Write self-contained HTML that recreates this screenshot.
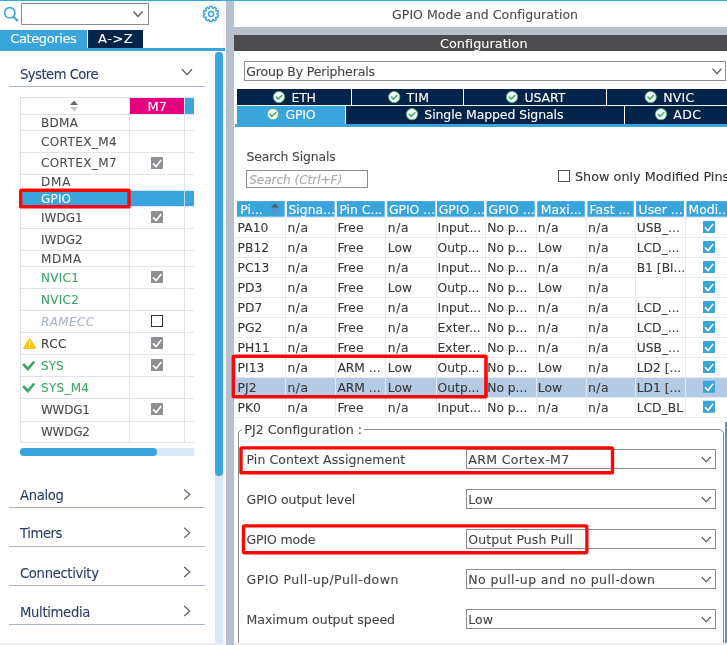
<!DOCTYPE html>
<html>
<head>
<meta charset="utf-8">
<title>GPIO Mode and Configuration</title>
<style>
html,body{margin:0;padding:0;}
body{width:727px;height:645px;position:relative;overflow:hidden;background:#fff;font-family:"DejaVu Sans","Liberation Sans",sans-serif;font-size:12px;color:#444;-webkit-text-stroke:0.1px currentColor;}
.a{position:absolute;}
.t{position:absolute;white-space:nowrap;height:20px;line-height:0;}
.t i{display:inline-block;width:0;height:20px;}
.hl{position:absolute;height:1px;background:#dfe3ee;}
.vl{position:absolute;width:1px;background:#dfe3ee;}
.sel{position:absolute;border:1px solid #8e8e8e;box-sizing:border-box;background:#fff;}
</style>
</head>
<body>
<div id="app" style="position:absolute;left:0;top:0;width:727px;height:645px;will-change:transform;">
<div class="a" style="left:0px;top:0px;width:727px;height:1px;background:#3aa4dc;"></div>
<svg class="a" style="left:3px;top:6px" width="16" height="17" viewBox="0 0 16 17"><circle cx="6.8" cy="6.8" r="5.2" fill="none" stroke="#3aa4dc" stroke-width="1.65"/><path d="M10.8 11 L14.3 14.5" stroke="#3aa4dc" stroke-width="1.9" stroke-linecap="round"/></svg>
<div class="sel" style="left:21px;top:3px;width:128px;height:22px;"></div>
<svg class="a" style="left:131px;top:9px" width="14" height="10" viewBox="131 9 14 10"><path d="M133.50 11.50 L138.00 16.50 L142.50 11.50" fill="none" stroke="#5a5a5a" stroke-width="1.25"/></svg>
<svg class="a" style="left:202px;top:4.9px" width="18" height="18" viewBox="-9 -9 18 18"><g fill="none" stroke="#3aa4dc" stroke-width="1.4" stroke-linejoin="round"><circle r="2.5"/><path d="M1.15 7.61 L-1.15 7.61 L-1.43 5.83 L-2.27 5.55 L-3.54 6.84 L-5.41 5.48 L-4.58 3.88 L-5.10 3.16 L-6.89 3.45 L-7.60 1.26 L-5.98 0.44 L-5.98 -0.44 L-7.60 -1.26 L-6.89 -3.45 L-5.10 -3.16 L-4.58 -3.88 L-5.41 -5.48 L-3.54 -6.84 L-2.27 -5.55 L-1.43 -5.83 L-1.15 -7.61 L1.15 -7.61 L1.43 -5.83 L2.27 -5.55 L3.54 -6.84 L5.41 -5.48 L4.58 -3.88 L5.10 -3.16 L6.89 -3.45 L7.60 -1.26 L5.98 -0.44 L5.98 0.44 L7.60 1.26 L6.89 3.45 L5.10 3.16 L4.58 3.88 L5.41 5.48 L3.54 6.84 L2.27 5.55 L1.43 5.83 Z"/></g></svg>
<div class="a" style="left:0px;top:30px;width:87px;height:18px;background:#3aa4dc;"></div>
<div class="t" style="left:10.2px;top:23.30px;font-size:13px;color:#fff;letter-spacing:-0.377px;"><i></i>Categories</div>
<div class="a" style="left:88px;top:30px;width:55px;height:18px;background:#03234b;"></div>
<div class="t" style="left:98px;top:23.30px;font-size:13px;color:#fff;letter-spacing:0.551px;"><i></i>A-&gt;Z</div>
<div class="t" style="left:20px;top:59.00px;font-size:13.2px;color:#2b3d66;letter-spacing:-0.534px;"><i></i>System Core</div>
<svg class="a" style="left:180px;top:67px" width="14" height="10" viewBox="180 67 14 10"><path d="M182.00 69.25 L187.00 74.75 L192.00 69.25" fill="none" stroke="#666" stroke-width="1.3"/></svg>
<div class="a" style="left:9px;top:86px;width:196px;height:1px;background:#a9b4c9;"></div>
<div class="a" style="left:130px;top:98px;width:54px;height:16px;background:#e6007e;"></div>
<div class="a" style="left:185px;top:98px;width:9px;height:16px;background:#3aa4dc;"></div>
<div class="t" style="left:147.6px;top:91.20px;font-size:13px;color:#fff;"><i></i>M7</div>
<svg class="a" style="left:70px;top:100px" width="8" height="12" viewBox="0 0 8 12"><path d="M0 5 L4 0.5 L8 5 Z" fill="#666"/><path d="M0 7 L4 11.5 L8 7 Z" fill="#c4c4c4"/></svg>
<div class="hl" style="left:20px;top:97.0px;width:174px;"></div>
<div class="hl" style="left:20px;top:114.4px;width:174px;"></div>
<div class="hl" style="left:20px;top:130.1px;width:174px;"></div>
<div class="hl" style="left:20px;top:152.4px;width:174px;"></div>
<div class="hl" style="left:20px;top:174.2px;width:174px;"></div>
<div class="hl" style="left:20px;top:190.0px;width:174px;"></div>
<div class="hl" style="left:20px;top:206.2px;width:174px;"></div>
<div class="hl" style="left:20px;top:228.3px;width:174px;"></div>
<div class="hl" style="left:20px;top:250.1px;width:174px;"></div>
<div class="hl" style="left:20px;top:266.3px;width:174px;"></div>
<div class="hl" style="left:20px;top:288.4px;width:174px;"></div>
<div class="hl" style="left:20px;top:310.3px;width:174px;"></div>
<div class="hl" style="left:20px;top:332.3px;width:174px;"></div>
<div class="hl" style="left:20px;top:354.4px;width:174px;"></div>
<div class="hl" style="left:20px;top:376.4px;width:174px;"></div>
<div class="hl" style="left:20px;top:398.4px;width:174px;"></div>
<div class="hl" style="left:20px;top:420.5px;width:174px;"></div>
<div class="hl" style="left:20px;top:442.4px;width:174px;"></div>
<div class="vl" style="left:20px;top:97px;height:346px;"></div>
<div class="vl" style="left:129px;top:97px;height:346px;"></div>
<div class="vl" style="left:184px;top:97px;height:346px;"></div>
<div class="a" style="left:20px;top:190.8px;width:174px;height:15.4px;background:#3aa4dc;"></div>
<div class="a" style="left:184px;top:190.8px;width:1px;height:15.4px;background:#bcdcf2;"></div>
<div class="t" style="left:41px;top:107.00px;font-size:12px;color:#4c4c4c;letter-spacing:0.316px;"><i></i>BDMA</div>
<div class="t" style="left:41px;top:126.20px;font-size:12px;color:#4c4c4c;letter-spacing:0.388px;"><i></i>CORTEX_M4</div>
<div class="t" style="left:41px;top:147.40px;font-size:12px;color:#4c4c4c;letter-spacing:0.388px;"><i></i>CORTEX_M7</div>
<svg class="a" style="left:151px;top:157px" width="12" height="12" viewBox="151 157 12 12"><g transform="translate(151 157)"><rect width="12" height="12" rx="0.5" fill="#8f8f96"/><path d="M2.0 6.4 L5.1 9.5 L10.2 3.0" fill="none" stroke="#fff" stroke-width="1.6"/></g></svg>
<div class="t" style="left:41px;top:166.30px;font-size:12px;color:#4c4c4c;letter-spacing:0.799px;"><i></i>DMA</div>
<div class="t" style="left:41px;top:182.60px;font-size:12px;color:#fff;letter-spacing:0.170px;"><i></i>GPIO</div>
<div class="t" style="left:41px;top:201.60px;font-size:12px;color:#4c4c4c;letter-spacing:0.004px;"><i></i>IWDG1</div>
<svg class="a" style="left:151px;top:211px" width="12" height="12" viewBox="151 211 12 12"><g transform="translate(151 211)"><rect width="12" height="12" rx="0.5" fill="#8f8f96"/><path d="M2.0 6.4 L5.1 9.5 L10.2 3.0" fill="none" stroke="#fff" stroke-width="1.6"/></g></svg>
<div class="t" style="left:41px;top:223.80px;font-size:12px;color:#4c4c4c;letter-spacing:0.004px;"><i></i>IWDG2</div>
<div class="t" style="left:41px;top:242.70px;font-size:12px;color:#4c4c4c;letter-spacing:0.686px;"><i></i>MDMA</div>
<div class="t" style="left:41px;top:261.70px;font-size:12px;color:#3ca464;letter-spacing:0.272px;"><i></i>NVIC1</div>
<svg class="a" style="left:151px;top:271px" width="12" height="12" viewBox="151 271 12 12"><g transform="translate(151 271)"><rect width="12" height="12" rx="0.5" fill="#8f8f96"/><path d="M2.0 6.4 L5.1 9.5 L10.2 3.0" fill="none" stroke="#fff" stroke-width="1.6"/></g></svg>
<div class="t" style="left:41px;top:283.60px;font-size:12px;color:#3ca464;letter-spacing:0.272px;"><i></i>NVIC2</div>
<div class="t" style="left:41px;top:305.60px;font-size:12px;color:#aab4c8;font-style:italic;letter-spacing:0.393px;"><i></i>RAMECC</div>
<svg class="a" style="left:151px;top:315px" width="12" height="12" viewBox="151 315 12 12"><g transform="translate(151 315)"><rect x="0.5" y="0.5" width="11" height="11" fill="#fff" stroke="#333" stroke-width="1"/></g></svg>
<div class="t" style="left:41px;top:327.75px;font-size:12px;color:#3e3e3e;letter-spacing:0.501px;"><i></i>RCC</div>
<svg class="a" style="left:151px;top:337px" width="12" height="12" viewBox="151 337 12 12"><g transform="translate(151 337)"><rect width="12" height="12" rx="0.5" fill="#8f8f96"/><path d="M2.0 6.4 L5.1 9.5 L10.2 3.0" fill="none" stroke="#fff" stroke-width="1.6"/></g></svg>
<div class="t" style="left:41px;top:349.60px;font-size:12px;color:#3ca464;letter-spacing:0.012px;"><i></i>SYS</div>
<svg class="a" style="left:151px;top:359px" width="12" height="12" viewBox="151 359 12 12"><g transform="translate(151 359)"><rect width="12" height="12" rx="0.5" fill="#8f8f96"/><path d="M2.0 6.4 L5.1 9.5 L10.2 3.0" fill="none" stroke="#fff" stroke-width="1.6"/></g></svg>
<div class="t" style="left:41px;top:371.60px;font-size:12px;color:#3ca464;letter-spacing:0.275px;"><i></i>SYS_M4</div>
<div class="t" style="left:41px;top:393.60px;font-size:12px;color:#4c4c4c;letter-spacing:-0.281px;"><i></i>WWDG1</div>
<svg class="a" style="left:151px;top:403px" width="12" height="12" viewBox="151 403 12 12"><g transform="translate(151 403)"><rect width="12" height="12" rx="0.5" fill="#8f8f96"/><path d="M2.0 6.4 L5.1 9.5 L10.2 3.0" fill="none" stroke="#fff" stroke-width="1.6"/></g></svg>
<div class="t" style="left:41px;top:415.60px;font-size:12px;color:#4c4c4c;letter-spacing:-0.241px;"><i></i>WWDG2</div>
<svg class="a" style="left:22px;top:336px" width="16" height="15" viewBox="22 336 16 15"><path d="M29.6 339 L35.2 348.1 L24 348.1 Z" fill="#fcc512" stroke="#fcc512" stroke-width="1.7" stroke-linejoin="round"/><path d="M29.6 341.6 L29.6 345.2" stroke="#fff" stroke-width="1.1" stroke-linecap="round"/><circle cx="29.6" cy="346.9" r="0.65" fill="#fff"/></svg>
<svg class="a" style="left:20px;top:357px" width="18" height="16" viewBox="20 357 18 16"><path d="M23.1 364.00 L27.8 369.00 L34.2 361.50" fill="none" stroke="#3ca464" stroke-width="2.6"/></svg>
<svg class="a" style="left:20px;top:379px" width="18" height="16" viewBox="20 379 18 16"><path d="M23.1 386.00 L27.8 391.00 L34.2 383.50" fill="none" stroke="#3ca464" stroke-width="2.6"/></svg>
<svg class="a" style="left:18px;top:187px" width="114" height="23" viewBox="18 187 114 23"><rect x="20.70" y="190.20" width="108.30" height="16.60" rx="0.9" fill="none" stroke="#ff0606" stroke-width="3.4"/></svg>
<div class="a" style="left:20px;top:448px;width:174px;height:8px;background:#dbe8f7;"></div>
<div class="a" style="left:20px;top:448px;width:137px;height:8px;background:#3aa4dc;border-radius:4px;"></div>
<div class="t" style="left:20px;top:480.00px;font-size:13.2px;color:#2b3d66;letter-spacing:-0.318px;"><i></i>Analog</div>
<svg class="a" style="left:182px;top:487px" width="10" height="15" viewBox="182 487 10 15"><path d="M184.25 489.50 L189.75 494.50 L184.25 499.50" fill="none" stroke="#666" stroke-width="1.3"/></svg>
<div class="a" style="left:9px;top:506.8px;width:196px;height:1px;background:#a9b4c9;"></div>
<div class="t" style="left:20px;top:518.30px;font-size:13.2px;color:#2b3d66;letter-spacing:-0.418px;"><i></i>Timers</div>
<svg class="a" style="left:182px;top:525px" width="10" height="15" viewBox="182 525 10 15"><path d="M184.25 527.80 L189.75 532.80 L184.25 537.80" fill="none" stroke="#666" stroke-width="1.3"/></svg>
<div class="a" style="left:9px;top:545.8px;width:196px;height:1px;background:#a9b4c9;"></div>
<div class="t" style="left:20px;top:557.60px;font-size:13.2px;color:#2b3d66;letter-spacing:-0.334px;"><i></i>Connectivity</div>
<svg class="a" style="left:182px;top:565px" width="10" height="15" viewBox="182 565 10 15"><path d="M184.25 567.10 L189.75 572.10 L184.25 577.10" fill="none" stroke="#666" stroke-width="1.3"/></svg>
<div class="a" style="left:9px;top:584.7px;width:196px;height:1px;background:#a9b4c9;"></div>
<div class="t" style="left:20px;top:596.60px;font-size:13.2px;color:#2b3d66;letter-spacing:-0.328px;"><i></i>Multimedia</div>
<svg class="a" style="left:182px;top:604px" width="10" height="15" viewBox="182 604 10 15"><path d="M184.25 606.10 L189.75 611.10 L184.25 616.10" fill="none" stroke="#666" stroke-width="1.3"/></svg>
<div class="a" style="left:9px;top:623.7px;width:196px;height:1px;background:#a9b4c9;"></div>
<div class="a" style="left:215px;top:52px;width:8px;height:591px;background:#dbe8f7;"></div>
<div class="a" style="left:215px;top:52px;width:8px;height:424px;background:#3aa4dc;border-radius:4px;"></div>
<div class="a" style="left:223px;top:1px;width:3px;height:644px;background:#faf6f6;"></div>
<div class="a" style="left:226px;top:1px;width:8px;height:644px;background:#b8c0cc;"></div>
<div class="a" style="left:0px;top:48px;width:225px;height:3px;background:#3aa4dc;"></div>
<div class="a" style="left:234px;top:27px;width:493px;height:8px;background:#b8c0cc;"></div>
<div class="a" style="left:234px;top:35px;width:493px;height:15.6px;background:#4b4b4d;"></div>
<div class="t" style="left:392.1px;top:-1.20px;font-size:12.5px;color:#4a4a4a;letter-spacing:0.036px;"><i></i>GPIO Mode and Configuration</div>
<div class="t" style="left:439.9px;top:27.80px;font-size:12.8px;color:#fff;letter-spacing:0.069px;"><i></i>Configuration</div>
<div class="sel" style="left:244px;top:61px;width:482px;height:20px;"></div>
<div class="t" style="left:246.3px;top:55.60px;font-size:12.5px;color:#444;letter-spacing:-0.160px;"><i></i>Group By Peripherals</div>
<svg class="a" style="left:710px;top:66px" width="14" height="10" viewBox="710 66 14 10"><path d="M712.50 68.70 L717.00 73.70 L721.50 68.70" fill="none" stroke="#5a5a5a" stroke-width="1.25"/></svg>
<div class="a" style="left:237px;top:89px;width:490px;height:16px;background:#03234b;"></div>
<div class="a" style="left:237px;top:105px;width:490px;height:1px;background:#f2f6fa;"></div>
<div class="a" style="left:237px;top:106px;width:490px;height:18px;background:#03234b;"></div>
<div class="a" style="left:237px;top:106px;width:108.5px;height:18px;background:#3aa4dc;"></div>
<div class="a" style="left:235px;top:124px;width:492px;height:3px;background:#3aa4dc;"></div>
<div class="a" style="left:351px;top:89px;width:1px;height:16px;background:#fff;"></div>
<div class="a" style="left:463px;top:89px;width:1px;height:16px;background:#fff;"></div>
<div class="a" style="left:606px;top:89px;width:1px;height:16px;background:#fff;"></div>
<div class="a" style="left:345px;top:106px;width:1px;height:18px;background:#fff;"></div>
<div class="a" style="left:624px;top:106px;width:1px;height:18px;background:#fff;"></div>
<svg class="a" style="left:272px;top:90px" width="14" height="14" viewBox="272 90 14 14"><g transform="translate(279 97)"><circle r="5.6" fill="#fbfffc" stroke="#4cb878" stroke-width="0.9"/><path d="M-3.2 -0.5 L-0.9 2.1 L3.3 -1.9" fill="none" stroke="#3cb06a" stroke-width="1.5"/></g></svg>
<div class="t" style="left:291.5px;top:81.80px;font-size:12.5px;color:#fff;letter-spacing:-0.211px;"><i></i>ETH</div>
<svg class="a" style="left:387px;top:90px" width="15" height="14" viewBox="387 90 15 14"><g transform="translate(394.2 97)"><circle r="5.6" fill="#fbfffc" stroke="#4cb878" stroke-width="0.9"/><path d="M-3.2 -0.5 L-0.9 2.1 L3.3 -1.9" fill="none" stroke="#3cb06a" stroke-width="1.5"/></g></svg>
<div class="t" style="left:406.6px;top:81.80px;font-size:12.5px;color:#fff;letter-spacing:0.198px;"><i></i>TIM</div>
<svg class="a" style="left:505px;top:90px" width="14" height="14" viewBox="505 90 14 14"><g transform="translate(512 97)"><circle r="5.6" fill="#fbfffc" stroke="#4cb878" stroke-width="0.9"/><path d="M-3.2 -0.5 L-0.9 2.1 L3.3 -1.9" fill="none" stroke="#3cb06a" stroke-width="1.5"/></g></svg>
<div class="t" style="left:524.4px;top:81.80px;font-size:12.5px;color:#fff;letter-spacing:-0.056px;"><i></i>USART</div>
<svg class="a" style="left:643px;top:90px" width="15" height="14" viewBox="643 90 15 14"><g transform="translate(650.7 97)"><circle r="5.6" fill="#fbfffc" stroke="#4cb878" stroke-width="0.9"/><path d="M-3.2 -0.5 L-0.9 2.1 L3.3 -1.9" fill="none" stroke="#3cb06a" stroke-width="1.5"/></g></svg>
<div class="t" style="left:663.2px;top:81.80px;font-size:12.5px;color:#fff;letter-spacing:0.221px;"><i></i>NVIC</div>
<svg class="a" style="left:265px;top:107px" width="15" height="15" viewBox="265 107 15 15"><g transform="translate(272.9 114.2)"><circle r="5.6" fill="#fbfffc" stroke="#4cb878" stroke-width="0.9"/><path d="M-3.2 -0.5 L-0.9 2.1 L3.3 -1.9" fill="none" stroke="#3cb06a" stroke-width="1.5"/></g></svg>
<div class="t" style="left:285.6px;top:98.80px;font-size:12.5px;color:#fff;letter-spacing:-0.237px;"><i></i>GPIO</div>
<svg class="a" style="left:405px;top:107px" width="14" height="15" viewBox="405 107 14 15"><g transform="translate(412 114.2)"><circle r="5.6" fill="#fbfffc" stroke="#4cb878" stroke-width="0.9"/><path d="M-3.2 -0.5 L-0.9 2.1 L3.3 -1.9" fill="none" stroke="#3cb06a" stroke-width="1.5"/></g></svg>
<div class="t" style="left:424.3px;top:98.80px;font-size:12.5px;color:#fff;letter-spacing:-0.106px;"><i></i>Single Mapped Signals</div>
<svg class="a" style="left:654px;top:107px" width="14" height="15" viewBox="654 107 14 15"><g transform="translate(661 114.2)"><circle r="5.6" fill="#fbfffc" stroke="#4cb878" stroke-width="0.9"/><path d="M-3.2 -0.5 L-0.9 2.1 L3.3 -1.9" fill="none" stroke="#3cb06a" stroke-width="1.5"/></g></svg>
<div class="t" style="left:673.3px;top:98.80px;font-size:12.5px;color:#fff;letter-spacing:0.332px;"><i></i>ADC</div>
<div class="t" style="left:246.5px;top:140.70px;font-size:12.4px;color:#444;letter-spacing:-0.142px;"><i></i>Search Signals</div>
<div class="sel" style="left:246px;top:170px;width:122px;height:18px;"></div>
<div class="t" style="left:249.2px;top:164.00px;font-size:12.2px;color:#aaa;font-style:italic;letter-spacing:-0.102px;"><i></i>Search (Ctrl+F)</div>
<div class="a" style="left:558px;top:170px;width:12px;height:12px;border:1px solid #555;box-sizing:border-box;background:#fff;"></div>
<div class="t" style="left:575px;top:161.00px;font-size:12.8px;color:#333;"><i></i>Show only Modified Pins</div>
<svg class="a" style="left:236px;top:201px" width="491" height="16" viewBox="236 201 491 16"><rect x="237" y="201.1" width="47.7" height="15.6" fill="#3aa4dc"/><rect x="286.9" y="201.1" width="47.7" height="15.6" fill="#3aa4dc"/><rect x="336.8" y="201.1" width="47.9" height="15.6" fill="#3aa4dc"/><rect x="387.2" y="201.1" width="48.1" height="15.6" fill="#3aa4dc"/><rect x="437" y="201.1" width="47.1" height="15.6" fill="#3aa4dc"/><rect x="486.6" y="201.1" width="48.1" height="15.6" fill="#3aa4dc"/><rect x="537.2" y="201.1" width="47.6" height="15.6" fill="#3aa4dc"/><rect x="587.4" y="201.1" width="46.4" height="15.6" fill="#3aa4dc"/><rect x="636.1" y="201.1" width="47.8" height="15.6" fill="#3aa4dc"/><rect x="686.4" y="201.1" width="40.6" height="15.6" fill="#3aa4dc"/></svg>
<div class="t" style="left:240.3px;top:193.70px;font-size:12.4px;color:#fff;"><i></i>Pi...</div>
<div class="t" style="left:288.5px;top:193.70px;font-size:12.4px;color:#fff;"><i></i>Signa...</div>
<div class="t" style="left:339.4px;top:193.70px;font-size:12.4px;color:#fff;"><i></i>Pin C...</div>
<div class="t" style="left:388.9px;top:193.70px;font-size:12.4px;color:#fff;"><i></i>GPIO ...</div>
<div class="t" style="left:438.7px;top:193.70px;font-size:12.4px;color:#fff;"><i></i>GPIO ...</div>
<div class="t" style="left:488.4px;top:193.70px;font-size:12.4px;color:#fff;"><i></i>GPIO ...</div>
<div class="t" style="left:540.7px;top:193.70px;font-size:12.4px;color:#fff;"><i></i>Maxi...</div>
<div class="t" style="left:589.6px;top:193.70px;font-size:12.4px;color:#fff;"><i></i>Fast ...</div>
<div class="t" style="left:638.6px;top:193.70px;font-size:12.4px;color:#fff;"><i></i>User ...</div>
<div class="t" style="left:688.5px;top:193.70px;font-size:12.4px;color:#fff;"><i></i>Modi...</div>
<svg class="a" style="left:271px;top:203px" width="8" height="12" viewBox="0 0 8 12"><path d="M0 4.5 L4 0.5 L8 4.5 Z" fill="#555"/><path d="M1.2 5 L6.8 5 L6.8 11 L1.2 11 Z" fill="#6f86b8" opacity="0.45"/></svg>
<div class="a" style="left:236px;top:377.5px;width:491px;height:20px;background:#b4cbe6;"></div>
<div class="hl" style="left:236px;top:217.1px;width:491px;background:#e6e9f1;"></div>
<div class="hl" style="left:236px;top:237.1px;width:491px;background:#e6e9f1;"></div>
<div class="hl" style="left:236px;top:257.0px;width:491px;background:#e6e9f1;"></div>
<div class="hl" style="left:236px;top:277.0px;width:491px;background:#e6e9f1;"></div>
<div class="hl" style="left:236px;top:297.0px;width:491px;background:#e6e9f1;"></div>
<div class="hl" style="left:236px;top:316.9px;width:491px;background:#e6e9f1;"></div>
<div class="hl" style="left:236px;top:336.9px;width:491px;background:#e6e9f1;"></div>
<div class="hl" style="left:236px;top:356.9px;width:491px;background:#e6e9f1;"></div>
<div class="hl" style="left:236px;top:376.9px;width:491px;background:#e6e9f1;"></div>
<div class="hl" style="left:236px;top:396.8px;width:491px;background:#e6e9f1;"></div>
<div class="hl" style="left:236px;top:416.8px;width:491px;background:#e6e9f1;"></div>
<div class="vl" style="left:285.3px;top:217px;height:200px;background:#e6e9f1;"></div>
<div class="vl" style="left:335.3px;top:217px;height:200px;background:#e6e9f1;"></div>
<div class="vl" style="left:385.3px;top:217px;height:200px;background:#e6e9f1;"></div>
<div class="vl" style="left:435.5px;top:217px;height:200px;background:#e6e9f1;"></div>
<div class="vl" style="left:485.3px;top:217px;height:200px;background:#e6e9f1;"></div>
<div class="vl" style="left:535.5px;top:217px;height:200px;background:#e6e9f1;"></div>
<div class="vl" style="left:585.5px;top:217px;height:200px;background:#e6e9f1;"></div>
<div class="vl" style="left:634.8px;top:217px;height:200px;background:#e6e9f1;"></div>
<div class="vl" style="left:684.8px;top:217px;height:200px;background:#e6e9f1;"></div>
<div class="t" style="left:237.6px;top:211.90px;font-size:12.3px;color:#383838;"><i></i>PA10</div>
<div class="t" style="left:287.5px;top:211.90px;font-size:12.3px;color:#383838;letter-spacing:0.574px;"><i></i>n/a</div>
<div class="t" style="left:337.40000000000003px;top:211.90px;font-size:12.3px;color:#383838;"><i></i>Free</div>
<div class="t" style="left:387.8px;top:211.90px;font-size:12.3px;color:#383838;letter-spacing:0.574px;"><i></i>n/a</div>
<div class="t" style="left:437.6px;top:211.90px;font-size:12.3px;color:#383838;"><i></i>Input...</div>
<div class="t" style="left:487.20000000000005px;top:211.90px;font-size:12.3px;color:#383838;"><i></i>No p...</div>
<div class="t" style="left:537.8000000000001px;top:211.90px;font-size:12.3px;color:#383838;letter-spacing:0.574px;"><i></i>n/a</div>
<div class="t" style="left:588.0px;top:211.90px;font-size:12.3px;color:#383838;letter-spacing:0.574px;"><i></i>n/a</div>
<div class="t" style="left:636.7px;top:211.90px;font-size:12.3px;color:#383838;"><i></i>USB_...</div>
<svg class="a" style="left:703px;top:221px" width="12" height="13" viewBox="703 221 12 13"><g transform="translate(703 221.1)"><rect width="12" height="12" rx="0.5" fill="#3aa4dc"/><path d="M2.0 6.4 L5.1 9.5 L10.2 3.0" fill="none" stroke="#fff" stroke-width="1.6"/></g></svg>
<div class="t" style="left:237.6px;top:231.87px;font-size:12.3px;color:#383838;"><i></i>PB12</div>
<div class="t" style="left:287.5px;top:231.87px;font-size:12.3px;color:#383838;letter-spacing:0.574px;"><i></i>n/a</div>
<div class="t" style="left:337.40000000000003px;top:231.87px;font-size:12.3px;color:#383838;"><i></i>Free</div>
<div class="t" style="left:387.8px;top:231.87px;font-size:12.3px;color:#383838;"><i></i>Low</div>
<div class="t" style="left:437.6px;top:231.87px;font-size:12.3px;color:#383838;"><i></i>Outp...</div>
<div class="t" style="left:487.20000000000005px;top:231.87px;font-size:12.3px;color:#383838;"><i></i>No p...</div>
<div class="t" style="left:537.8000000000001px;top:231.87px;font-size:12.3px;color:#383838;"><i></i>Low</div>
<div class="t" style="left:588.0px;top:231.87px;font-size:12.3px;color:#383838;letter-spacing:0.574px;"><i></i>n/a</div>
<div class="t" style="left:636.7px;top:231.87px;font-size:12.3px;color:#383838;"><i></i>LCD_...</div>
<svg class="a" style="left:703px;top:241px" width="12" height="13" viewBox="703 241 12 13"><g transform="translate(703 241.07)"><rect width="12" height="12" rx="0.5" fill="#3aa4dc"/><path d="M2.0 6.4 L5.1 9.5 L10.2 3.0" fill="none" stroke="#fff" stroke-width="1.6"/></g></svg>
<div class="t" style="left:237.6px;top:251.84px;font-size:12.3px;color:#383838;"><i></i>PC13</div>
<div class="t" style="left:287.5px;top:251.84px;font-size:12.3px;color:#383838;letter-spacing:0.574px;"><i></i>n/a</div>
<div class="t" style="left:337.40000000000003px;top:251.84px;font-size:12.3px;color:#383838;"><i></i>Free</div>
<div class="t" style="left:387.8px;top:251.84px;font-size:12.3px;color:#383838;letter-spacing:0.574px;"><i></i>n/a</div>
<div class="t" style="left:437.6px;top:251.84px;font-size:12.3px;color:#383838;"><i></i>Input...</div>
<div class="t" style="left:487.20000000000005px;top:251.84px;font-size:12.3px;color:#383838;"><i></i>No p...</div>
<div class="t" style="left:537.8000000000001px;top:251.84px;font-size:12.3px;color:#383838;letter-spacing:0.574px;"><i></i>n/a</div>
<div class="t" style="left:588.0px;top:251.84px;font-size:12.3px;color:#383838;letter-spacing:0.574px;"><i></i>n/a</div>
<div class="t" style="left:636.7px;top:251.84px;font-size:12.3px;color:#383838;"><i></i>B1 [Bl...</div>
<svg class="a" style="left:703px;top:261px" width="12" height="13" viewBox="703 261 12 13"><g transform="translate(703 261.03999999999996)"><rect width="12" height="12" rx="0.5" fill="#3aa4dc"/><path d="M2.0 6.4 L5.1 9.5 L10.2 3.0" fill="none" stroke="#fff" stroke-width="1.6"/></g></svg>
<div class="t" style="left:237.6px;top:271.81px;font-size:12.3px;color:#383838;"><i></i>PD3</div>
<div class="t" style="left:287.5px;top:271.81px;font-size:12.3px;color:#383838;letter-spacing:0.574px;"><i></i>n/a</div>
<div class="t" style="left:337.40000000000003px;top:271.81px;font-size:12.3px;color:#383838;"><i></i>Free</div>
<div class="t" style="left:387.8px;top:271.81px;font-size:12.3px;color:#383838;"><i></i>Low</div>
<div class="t" style="left:437.6px;top:271.81px;font-size:12.3px;color:#383838;"><i></i>Outp...</div>
<div class="t" style="left:487.20000000000005px;top:271.81px;font-size:12.3px;color:#383838;"><i></i>No p...</div>
<div class="t" style="left:537.8000000000001px;top:271.81px;font-size:12.3px;color:#383838;"><i></i>Low</div>
<div class="t" style="left:588.0px;top:271.81px;font-size:12.3px;color:#383838;letter-spacing:0.574px;"><i></i>n/a</div>
<svg class="a" style="left:703px;top:281px" width="12" height="13" viewBox="703 281 12 13"><g transform="translate(703 281.01)"><rect width="12" height="12" rx="0.5" fill="#3aa4dc"/><path d="M2.0 6.4 L5.1 9.5 L10.2 3.0" fill="none" stroke="#fff" stroke-width="1.6"/></g></svg>
<div class="t" style="left:237.6px;top:291.78px;font-size:12.3px;color:#383838;"><i></i>PD7</div>
<div class="t" style="left:287.5px;top:291.78px;font-size:12.3px;color:#383838;letter-spacing:0.574px;"><i></i>n/a</div>
<div class="t" style="left:337.40000000000003px;top:291.78px;font-size:12.3px;color:#383838;"><i></i>Free</div>
<div class="t" style="left:387.8px;top:291.78px;font-size:12.3px;color:#383838;letter-spacing:0.574px;"><i></i>n/a</div>
<div class="t" style="left:437.6px;top:291.78px;font-size:12.3px;color:#383838;"><i></i>Input...</div>
<div class="t" style="left:487.20000000000005px;top:291.78px;font-size:12.3px;color:#383838;"><i></i>No p...</div>
<div class="t" style="left:537.8000000000001px;top:291.78px;font-size:12.3px;color:#383838;letter-spacing:0.574px;"><i></i>n/a</div>
<div class="t" style="left:588.0px;top:291.78px;font-size:12.3px;color:#383838;letter-spacing:0.574px;"><i></i>n/a</div>
<div class="t" style="left:636.7px;top:291.78px;font-size:12.3px;color:#383838;"><i></i>LCD_...</div>
<svg class="a" style="left:703px;top:300px" width="12" height="13" viewBox="703 300 12 13"><g transform="translate(703 300.98)"><rect width="12" height="12" rx="0.5" fill="#3aa4dc"/><path d="M2.0 6.4 L5.1 9.5 L10.2 3.0" fill="none" stroke="#fff" stroke-width="1.6"/></g></svg>
<div class="t" style="left:237.6px;top:311.75px;font-size:12.3px;color:#383838;"><i></i>PG2</div>
<div class="t" style="left:287.5px;top:311.75px;font-size:12.3px;color:#383838;letter-spacing:0.574px;"><i></i>n/a</div>
<div class="t" style="left:337.40000000000003px;top:311.75px;font-size:12.3px;color:#383838;"><i></i>Free</div>
<div class="t" style="left:387.8px;top:311.75px;font-size:12.3px;color:#383838;letter-spacing:0.574px;"><i></i>n/a</div>
<div class="t" style="left:437.6px;top:311.75px;font-size:12.3px;color:#383838;"><i></i>Exter...</div>
<div class="t" style="left:487.20000000000005px;top:311.75px;font-size:12.3px;color:#383838;"><i></i>No p...</div>
<div class="t" style="left:537.8000000000001px;top:311.75px;font-size:12.3px;color:#383838;letter-spacing:0.574px;"><i></i>n/a</div>
<div class="t" style="left:588.0px;top:311.75px;font-size:12.3px;color:#383838;letter-spacing:0.574px;"><i></i>n/a</div>
<div class="t" style="left:636.7px;top:311.75px;font-size:12.3px;color:#383838;"><i></i>LCD_...</div>
<svg class="a" style="left:703px;top:320px" width="12" height="13" viewBox="703 320 12 13"><g transform="translate(703 320.95)"><rect width="12" height="12" rx="0.5" fill="#3aa4dc"/><path d="M2.0 6.4 L5.1 9.5 L10.2 3.0" fill="none" stroke="#fff" stroke-width="1.6"/></g></svg>
<div class="t" style="left:237.6px;top:331.72px;font-size:12.3px;color:#383838;"><i></i>PH11</div>
<div class="t" style="left:287.5px;top:331.72px;font-size:12.3px;color:#383838;letter-spacing:0.574px;"><i></i>n/a</div>
<div class="t" style="left:337.40000000000003px;top:331.72px;font-size:12.3px;color:#383838;"><i></i>Free</div>
<div class="t" style="left:387.8px;top:331.72px;font-size:12.3px;color:#383838;letter-spacing:0.574px;"><i></i>n/a</div>
<div class="t" style="left:437.6px;top:331.72px;font-size:12.3px;color:#383838;"><i></i>Exter...</div>
<div class="t" style="left:487.20000000000005px;top:331.72px;font-size:12.3px;color:#383838;"><i></i>No p...</div>
<div class="t" style="left:537.8000000000001px;top:331.72px;font-size:12.3px;color:#383838;letter-spacing:0.574px;"><i></i>n/a</div>
<div class="t" style="left:588.0px;top:331.72px;font-size:12.3px;color:#383838;letter-spacing:0.574px;"><i></i>n/a</div>
<div class="t" style="left:636.7px;top:331.72px;font-size:12.3px;color:#383838;"><i></i>USB_...</div>
<svg class="a" style="left:703px;top:340px" width="12" height="13" viewBox="703 340 12 13"><g transform="translate(703 340.91999999999996)"><rect width="12" height="12" rx="0.5" fill="#3aa4dc"/><path d="M2.0 6.4 L5.1 9.5 L10.2 3.0" fill="none" stroke="#fff" stroke-width="1.6"/></g></svg>
<div class="t" style="left:237.6px;top:351.69px;font-size:12.3px;color:#383838;"><i></i>PI13</div>
<div class="t" style="left:287.5px;top:351.69px;font-size:12.3px;color:#383838;letter-spacing:0.574px;"><i></i>n/a</div>
<div class="t" style="left:337.40000000000003px;top:351.69px;font-size:12.3px;color:#383838;"><i></i>ARM ...</div>
<div class="t" style="left:387.8px;top:351.69px;font-size:12.3px;color:#383838;"><i></i>Low</div>
<div class="t" style="left:437.6px;top:351.69px;font-size:12.3px;color:#383838;"><i></i>Outp...</div>
<div class="t" style="left:487.20000000000005px;top:351.69px;font-size:12.3px;color:#383838;"><i></i>No p...</div>
<div class="t" style="left:537.8000000000001px;top:351.69px;font-size:12.3px;color:#383838;"><i></i>Low</div>
<div class="t" style="left:588.0px;top:351.69px;font-size:12.3px;color:#383838;letter-spacing:0.574px;"><i></i>n/a</div>
<div class="t" style="left:636.7px;top:351.69px;font-size:12.3px;color:#383838;"><i></i>LD2 [...</div>
<svg class="a" style="left:703px;top:360px" width="12" height="13" viewBox="703 360 12 13"><g transform="translate(703 360.89)"><rect width="12" height="12" rx="0.5" fill="#3aa4dc"/><path d="M2.0 6.4 L5.1 9.5 L10.2 3.0" fill="none" stroke="#fff" stroke-width="1.6"/></g></svg>
<div class="t" style="left:237.6px;top:371.66px;font-size:12.3px;color:#383838;"><i></i>PJ2</div>
<div class="t" style="left:287.5px;top:371.66px;font-size:12.3px;color:#383838;letter-spacing:0.574px;"><i></i>n/a</div>
<div class="t" style="left:337.40000000000003px;top:371.66px;font-size:12.3px;color:#383838;"><i></i>ARM ...</div>
<div class="t" style="left:387.8px;top:371.66px;font-size:12.3px;color:#383838;"><i></i>Low</div>
<div class="t" style="left:437.6px;top:371.66px;font-size:12.3px;color:#383838;"><i></i>Outp...</div>
<div class="t" style="left:487.20000000000005px;top:371.66px;font-size:12.3px;color:#383838;"><i></i>No p...</div>
<div class="t" style="left:537.8000000000001px;top:371.66px;font-size:12.3px;color:#383838;"><i></i>Low</div>
<div class="t" style="left:588.0px;top:371.66px;font-size:12.3px;color:#383838;letter-spacing:0.574px;"><i></i>n/a</div>
<div class="t" style="left:636.7px;top:371.66px;font-size:12.3px;color:#383838;"><i></i>LD1 [...</div>
<svg class="a" style="left:703px;top:380px" width="12" height="13" viewBox="703 380 12 13"><g transform="translate(703 380.86)"><rect width="12" height="12" rx="0.5" fill="#3aa4dc"/><path d="M2.0 6.4 L5.1 9.5 L10.2 3.0" fill="none" stroke="#fff" stroke-width="1.6"/></g></svg>
<div class="t" style="left:237.6px;top:391.63px;font-size:12.3px;color:#383838;"><i></i>PK0</div>
<div class="t" style="left:287.5px;top:391.63px;font-size:12.3px;color:#383838;letter-spacing:0.574px;"><i></i>n/a</div>
<div class="t" style="left:337.40000000000003px;top:391.63px;font-size:12.3px;color:#383838;"><i></i>Free</div>
<div class="t" style="left:387.8px;top:391.63px;font-size:12.3px;color:#383838;letter-spacing:0.574px;"><i></i>n/a</div>
<div class="t" style="left:437.6px;top:391.63px;font-size:12.3px;color:#383838;"><i></i>Input...</div>
<div class="t" style="left:487.20000000000005px;top:391.63px;font-size:12.3px;color:#383838;"><i></i>No p...</div>
<div class="t" style="left:537.8000000000001px;top:391.63px;font-size:12.3px;color:#383838;letter-spacing:0.574px;"><i></i>n/a</div>
<div class="t" style="left:588.0px;top:391.63px;font-size:12.3px;color:#383838;letter-spacing:0.574px;"><i></i>n/a</div>
<div class="t" style="left:636.7px;top:391.63px;font-size:12.3px;color:#383838;"><i></i>LCD_BL</div>
<svg class="a" style="left:703px;top:400px" width="12" height="13" viewBox="703 400 12 13"><g transform="translate(703 400.83)"><rect width="12" height="12" rx="0.5" fill="#3aa4dc"/><path d="M2.0 6.4 L5.1 9.5 L10.2 3.0" fill="none" stroke="#fff" stroke-width="1.6"/></g></svg>
<svg class="a" style="left:230px;top:353px" width="259" height="47" viewBox="230 353 259 47"><rect x="233.40" y="356.20" width="252.60" height="40.50" rx="0.9" fill="none" stroke="#ff0606" stroke-width="3.6"/></svg>
<div class="a" style="left:238px;top:429px;width:486px;height:230px;border:1px solid #8a8a8a;border-radius:5px;box-sizing:border-box;"></div>
<div class="a" style="left:242px;top:425px;width:121.5px;height:10px;background:#fff;"></div>
<div class="t" style="left:244.3px;top:413.80px;font-size:12.7px;color:#444;letter-spacing:-0.009px;"><i></i>PJ2 Configuration :</div>
<div class="t" style="left:246.5px;top:443.70px;font-size:12.5px;color:#444;letter-spacing:0.084px;"><i></i>Pin Context Assignement</div>
<div class="sel" style="left:466px;top:449.3px;width:250px;height:19.6px;"></div>
<div class="t" style="left:468.3px;top:443.70px;font-size:12.5px;color:#444;letter-spacing:0.359px;"><i></i>ARM Cortex-M7</div>
<svg class="a" style="left:699px;top:454px" width="14" height="10" viewBox="699 454 14 10"><path d="M701.70 456.80 L706.20 461.80 L710.70 456.80" fill="none" stroke="#5a5a5a" stroke-width="1.25"/></svg>
<div class="t" style="left:246.5px;top:483.70px;font-size:12.5px;color:#444;letter-spacing:-0.056px;"><i></i>GPIO output level</div>
<div class="sel" style="left:466px;top:489.3px;width:250px;height:19.6px;"></div>
<div class="t" style="left:468.3px;top:483.70px;font-size:12.5px;color:#444;"><i></i>Low</div>
<svg class="a" style="left:699px;top:494px" width="14" height="10" viewBox="699 494 14 10"><path d="M701.70 496.80 L706.20 501.80 L710.70 496.80" fill="none" stroke="#5a5a5a" stroke-width="1.25"/></svg>
<div class="t" style="left:246.5px;top:523.70px;font-size:12.5px;color:#444;letter-spacing:-0.141px;"><i></i>GPIO mode</div>
<div class="sel" style="left:466px;top:529.3px;width:250px;height:19.6px;"></div>
<div class="t" style="left:468.3px;top:523.70px;font-size:12.5px;color:#444;letter-spacing:0.098px;"><i></i>Output Push Pull</div>
<svg class="a" style="left:699px;top:534px" width="14" height="10" viewBox="699 534 14 10"><path d="M701.70 536.80 L706.20 541.80 L710.70 536.80" fill="none" stroke="#5a5a5a" stroke-width="1.25"/></svg>
<div class="t" style="left:246.5px;top:563.70px;font-size:12.5px;color:#444;letter-spacing:0.472px;"><i></i>GPIO Pull-up/Pull-down</div>
<div class="sel" style="left:466px;top:569.3px;width:250px;height:19.6px;"></div>
<div class="t" style="left:468.3px;top:563.70px;font-size:12.5px;color:#444;letter-spacing:0.404px;"><i></i>No pull-up and no pull-down</div>
<svg class="a" style="left:699px;top:574px" width="14" height="10" viewBox="699 574 14 10"><path d="M701.70 576.80 L706.20 581.80 L710.70 576.80" fill="none" stroke="#5a5a5a" stroke-width="1.25"/></svg>
<div class="t" style="left:246.5px;top:603.70px;font-size:12.5px;color:#444;"><i></i>Maximum output speed</div>
<div class="sel" style="left:466px;top:609.3px;width:250px;height:19.6px;"></div>
<div class="t" style="left:468.3px;top:603.70px;font-size:12.5px;color:#444;"><i></i>Low</div>
<svg class="a" style="left:699px;top:614px" width="14" height="10" viewBox="699 614 14 10"><path d="M701.70 616.80 L706.20 621.80 L710.70 616.80" fill="none" stroke="#5a5a5a" stroke-width="1.25"/></svg>
<svg class="a" style="left:238px;top:445px" width="378" height="31" viewBox="238 445 378 31"><rect x="241.00" y="447.90" width="371.50" height="24.90" rx="0.9" fill="none" stroke="#ff0606" stroke-width="3.4"/></svg>
<svg class="a" style="left:240px;top:523px" width="350" height="33" viewBox="240 523 350 33"><rect x="243.45" y="525.95" width="343.40" height="26.80" rx="0.9" fill="none" stroke="#ff0606" stroke-width="3.3"/></svg>
<div class="a" style="left:725px;top:422px;width:2px;height:220.5px;background:#3aa4dc;"></div>
<div class="a" style="left:0px;top:642.5px;width:226px;height:2.5px;background:#eeeef2;"></div>
<div class="a" style="left:234px;top:642.5px;width:493px;height:2.5px;background:#eeeef2;"></div>
</div>
</body>
</html>
